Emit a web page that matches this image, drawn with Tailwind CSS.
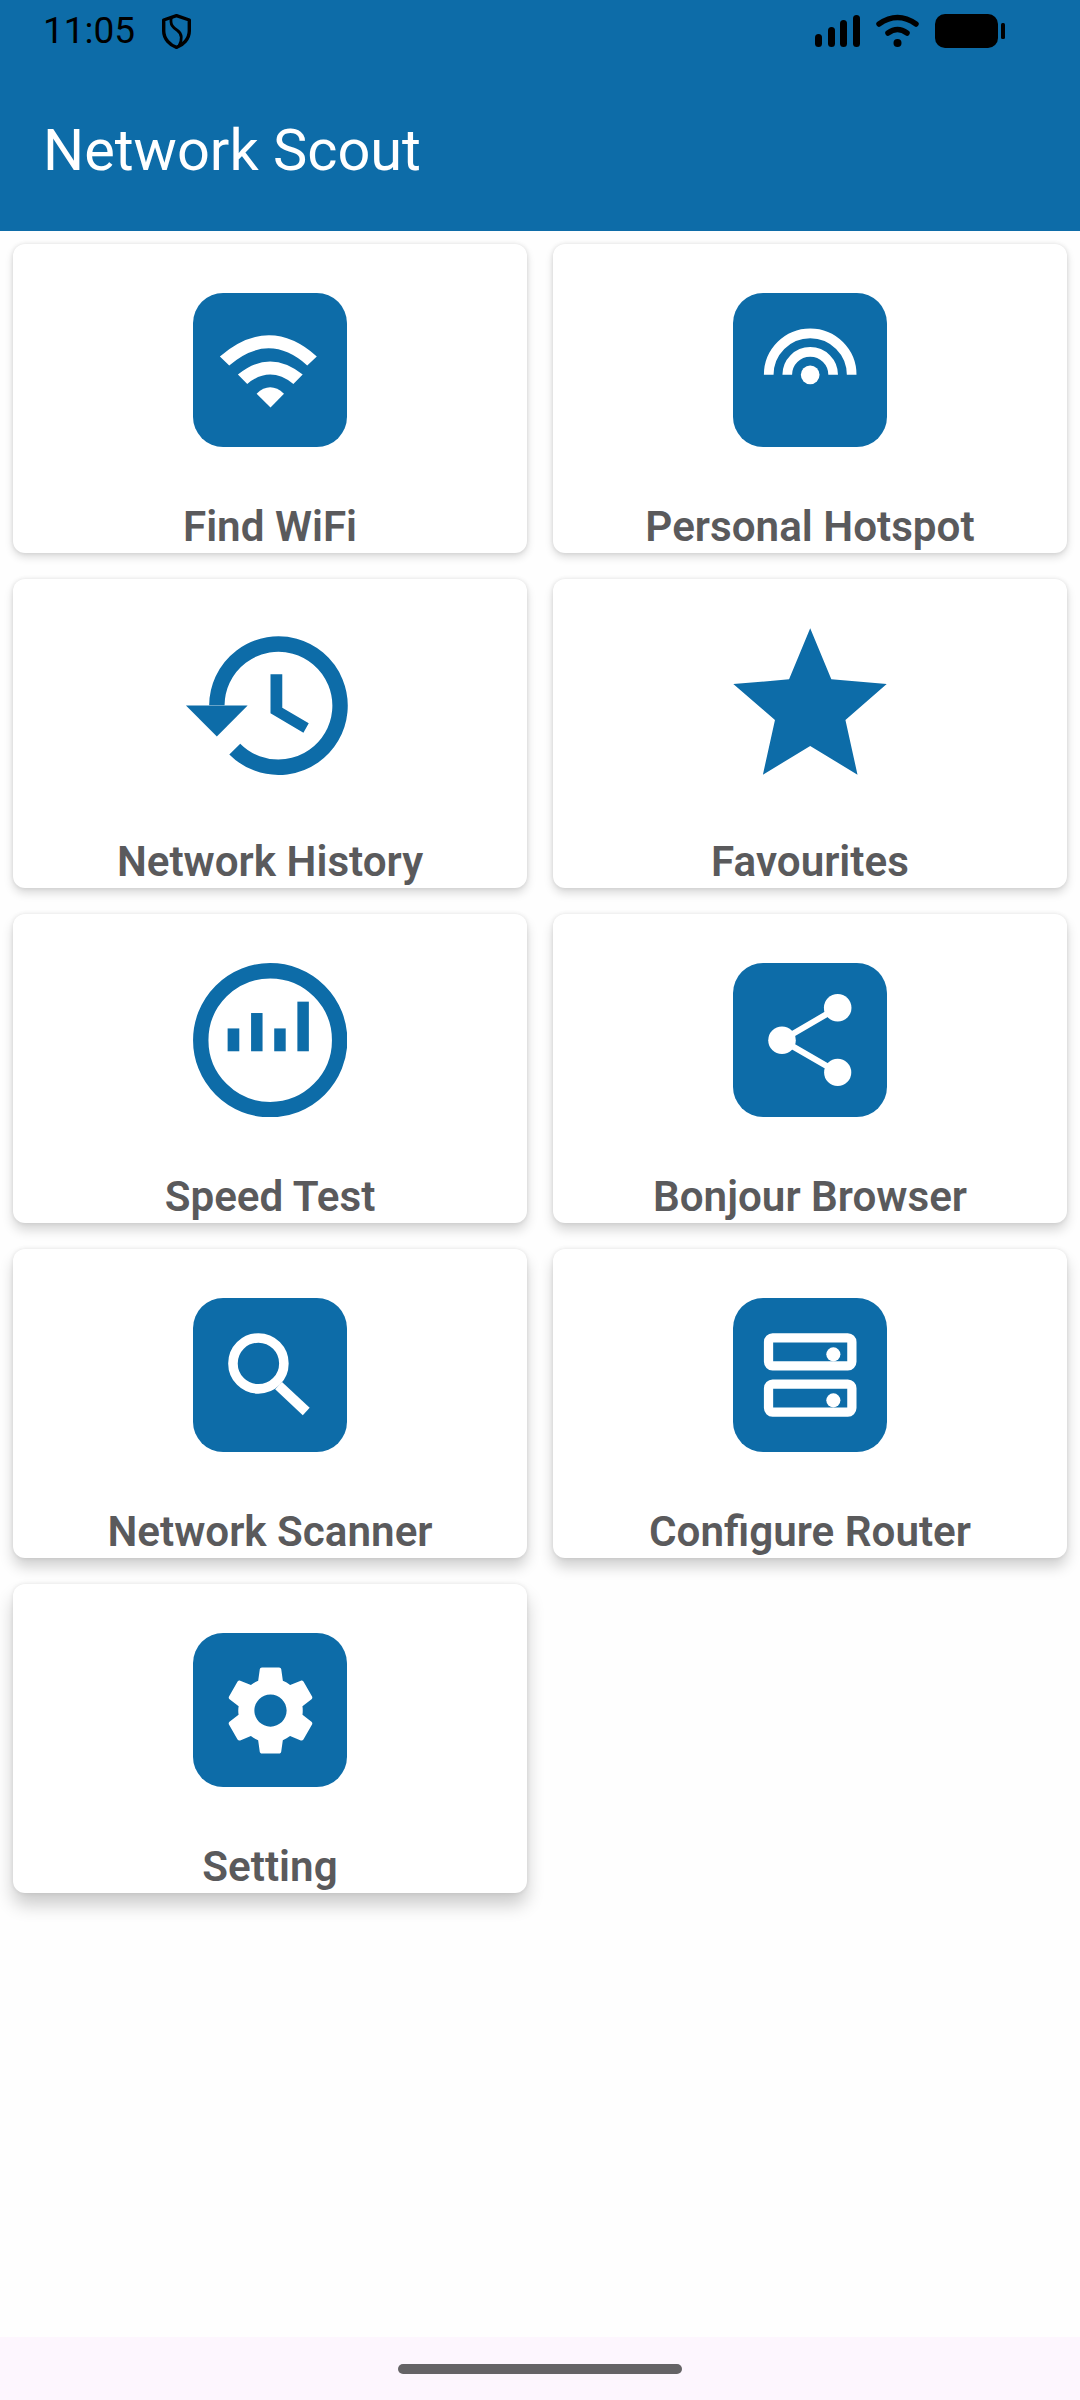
<!DOCTYPE html>
<html lang="en">
<head>
  <meta charset="UTF-8">
  <meta name="viewport" content="width=device-width, initial-scale=1.0">
  <title>Network Scout</title>
  <script src="https://cdn.jsdelivr.net/npm/@tailwindcss/browser@4"></script>
</head>
<body class="bg-[#fefefe] font-['Roboto',sans-serif]">
  <div class="w-[1080px] h-[2400px] flex flex-col overflow-hidden">

    <!-- app bar with status row -->
    <header class="h-[231px] bg-[#0d6ca8] shrink-0">
      <div class="h-[116px] flex items-start pl-[43px] pr-[75px]">
        <span class="mt-[9px] text-[37px] leading-[43px] text-black">11:05</span>
        <svg class="ml-[27px] mt-[14px]" width="29" height="35" viewBox="0 0 29 35" fill="none" stroke="#000">
          <path d="M14.5 1.7L27.3 6V17C27.3 25 21 31 14.5 33.4C8 31 1.700 25 1.700 17V6Z" stroke-width="3.400" stroke-linejoin="round"/>
          <path d="M9.500 3C7.500 11 11.500 14 15.500 16.500C20 19.500 20.500 26 17 32" stroke-width="2.800"/>
        </svg>
        <div class="ml-auto mt-[14px] flex items-start gap-[16px]">
          <svg width="45" height="34" viewBox="0 0 45 34" fill="#000">
            <rect x="0" y="20" width="7" height="13" rx="3.500"/>
            <rect x="13" y="13" width="7" height="20" rx="3.500"/>
            <rect x="25" y="6" width="7" height="27" rx="3.500"/>
            <rect x="38" y="1" width="7" height="32" rx="3.500"/>
          </svg>
          <svg width="43" height="34" viewBox="0 0 43 34" fill="none" stroke="#000" stroke-width="5.500" stroke-linecap="round">
            <path d="M3 10Q21.500 -3 40 10"/>
            <path d="M12 19Q21.500 12 31 19"/>
            <circle cx="21.500" cy="29" r="4" fill="#000" stroke="none"/>
          </svg>
          <svg width="70" height="34" viewBox="0 0 70 34" fill="#000">
            <rect x="0" y="0" width="63" height="34" rx="10"/>
            <rect x="66" y="9" width="4" height="16" rx="1.500"/>
          </svg>
        </div>
      </div>
      <h1 class="pl-[43px] text-[57.7px] leading-[68px] font-normal text-white">Network Scout</h1>
    </header>

    <!-- tools grid -->
    <main class="grid grid-cols-2 gap-[26px] px-[13px] pt-[13px]">

      <div class="h-[309px] bg-white rounded-[12px] flex flex-col items-center pt-[49px] overflow-hidden shadow-[0_4px_8px_rgba(0,0,0,0.14),0_0_4px_rgba(0,0,0,0.1)]">
        <svg class="shrink-0" width="154" height="154" viewBox="0 0 153 153">
          <rect width="153" height="153" rx="30" fill="#0d6ca8"/>
          <path fill="#fff" d="M26.700 63Q76 21 123 63L113.500 72Q75.500 38 36 72Z"/>
          <path fill="#fff" d="M44.600 81Q76.500 55 109 81L99.700 90.300Q76.500 71.700 53.900 90.300Z"/>
          <path fill="#fff" d="M63.200 100Q76.600 87.400 90.400 100L77 113.700Z"/>
        </svg>
        <span class="mt-[55px] text-[42.2px] leading-[50px] font-semibold text-[#5a5a5c]">Find WiFi</span>
      </div>

      <div class="h-[309px] bg-white rounded-[12px] flex flex-col items-center pt-[49px] overflow-hidden shadow-[0_4px_8px_rgba(0,0,0,0.14),0_0_4px_rgba(0,0,0,0.1)]">
        <svg class="shrink-0" width="154" height="154" viewBox="0 0 153 153">
          <rect width="153" height="153" rx="30" fill="#0d6ca8"/>
          <g fill="none" stroke="#fff" stroke-width="9.600">
            <path d="M35.500 81.300A41.200 41.200 0 0 1 117.900 81.300"/>
            <path d="M53.900 81.300A22.800 22.800 0 0 1 99.500 81.300"/>
          </g>
          <circle cx="76.700" cy="81.300" r="9.300" fill="#fff"/>
        </svg>
        <span class="mt-[55px] text-[42.2px] leading-[50px] font-semibold text-[#5a5a5c]">Personal Hotspot</span>
      </div>

      <div class="h-[309px] bg-white rounded-[12px] flex flex-col items-center pt-[49px] overflow-hidden shadow-[0_5px_10px_rgba(0,0,0,0.15),0_0_4px_rgba(0,0,0,0.1)]">
        <svg class="shrink-0 overflow-visible" width="154" height="154" viewBox="0 0 153 153">
          <path fill="none" stroke="#0d6ca8" stroke-width="15.300" d="M23.700 76.800A61.200 61.200 0 1 1 41.500 120.300"/>
          <path fill="#0d6ca8" d="M-7 77H54.300L23.700 107.700Z"/>
          <path fill="#0d6ca8" d="M77 46H88.700V79.300L115 94.700L109.700 104L77 84.700Z"/>
        </svg>
        <span class="mt-[55px] text-[42.2px] leading-[50px] font-semibold text-[#5a5a5c]">Network History</span>
      </div>

      <div class="h-[309px] bg-white rounded-[12px] flex flex-col items-center pt-[49px] overflow-hidden shadow-[0_5px_10px_rgba(0,0,0,0.15),0_0_4px_rgba(0,0,0,0.1)]">
        <svg class="shrink-0" width="154" height="154" viewBox="0 0 153 153">
          <path fill="#0d6ca8" d="M76.700 .3L97.700 51L152.700 55.700L111.700 91.300L123.700 145.700L76.700 117.300L29.700 145.700L41.700 91.300L.3 55.700L55.700 51Z"/>
        </svg>
        <span class="mt-[55px] text-[42.2px] leading-[50px] font-semibold text-[#5a5a5c]">Favourites</span>
      </div>

      <div class="h-[309px] bg-white rounded-[12px] flex flex-col items-center pt-[49px] overflow-hidden shadow-[0_7px_12px_rgba(0,0,0,0.16),0_0_4px_rgba(0,0,0,0.1)]">
        <svg class="shrink-0" width="154" height="154" viewBox="0 0 153 153">
          <circle cx="76.700" cy="76.700" r="69" fill="none" stroke="#0d6ca8" stroke-width="15.300"/>
          <g fill="#0d6ca8">
            <rect x="34.400" y="65" width="11.600" height="22.700"/>
            <rect x="57.700" y="49.700" width="11.400" height="38"/>
            <rect x="80.700" y="65" width="11.400" height="22.700"/>
            <rect x="103.700" y="38.400" width="11.400" height="49.300"/>
          </g>
        </svg>
        <span class="mt-[55px] text-[42.2px] leading-[50px] font-semibold text-[#5a5a5c]">Speed Test</span>
      </div>

      <div class="h-[309px] bg-white rounded-[12px] flex flex-col items-center pt-[49px] overflow-hidden shadow-[0_7px_12px_rgba(0,0,0,0.16),0_0_4px_rgba(0,0,0,0.1)]">
        <svg class="shrink-0" width="154" height="154" viewBox="0 0 153 153">
          <rect width="153" height="153" rx="30" fill="#0d6ca8"/>
          <path fill="none" stroke="#fff" stroke-width="6" d="M104 44.400L48.700 76.700L104 108.700"/>
          <g fill="#fff">
            <circle cx="104" cy="44.400" r="13.700"/>
            <circle cx="48.700" cy="76.700" r="13.700"/>
            <circle cx="104" cy="108.700" r="13.500"/>
          </g>
        </svg>
        <span class="mt-[55px] text-[42.2px] leading-[50px] font-semibold text-[#5a5a5c]">Bonjour Browser</span>
      </div>

      <div class="h-[309px] bg-white rounded-[12px] flex flex-col items-center pt-[49px] overflow-hidden shadow-[0_9px_14px_rgba(0,0,0,0.18),0_0_4px_rgba(0,0,0,0.1)]">
        <svg class="shrink-0" width="154" height="154" viewBox="0 0 153 153">
          <rect width="153" height="153" rx="30" fill="#0d6ca8"/>
          <circle cx="65" cy="65" r="25.300" fill="none" stroke="#fff" stroke-width="9.500"/>
          <path fill="none" stroke="#fff" stroke-width="10" d="M85 87L112.500 112.800"/>
        </svg>
        <span class="mt-[55px] text-[42.2px] leading-[50px] font-semibold text-[#5a5a5c]">Network Scanner</span>
      </div>

      <div class="h-[309px] bg-white rounded-[12px] flex flex-col items-center pt-[49px] overflow-hidden shadow-[0_9px_14px_rgba(0,0,0,0.18),0_0_4px_rgba(0,0,0,0.1)]">
        <svg class="shrink-0" width="154" height="154" viewBox="0 0 153 153">
          <rect width="153" height="153" rx="30" fill="#0d6ca8"/>
          <g fill="none" stroke="#fff" stroke-width="9.200">
            <rect x="35.300" y="39.600" width="82.800" height="27.800" rx="4"/>
            <rect x="35.300" y="85.600" width="82.800" height="27.800" rx="4"/>
          </g>
          <circle cx="99.700" cy="56" r="7" fill="#fff"/>
          <circle cx="99.700" cy="101.700" r="7" fill="#fff"/>
        </svg>
        <span class="mt-[55px] text-[42.2px] leading-[50px] font-semibold text-[#5a5a5c]">Configure Router</span>
      </div>

      <div class="h-[309px] bg-white rounded-[12px] flex flex-col items-center pt-[49px] overflow-hidden shadow-[0_12px_18px_rgba(0,0,0,0.2),0_0_4px_rgba(0,0,0,0.1)]">
        <svg class="shrink-0" width="154" height="154" viewBox="0 0 153 153">
          <rect width="153" height="153" rx="30" fill="#0d6ca8"/>
          <path transform="translate(23.600 23.600) scale(4.450)" fill="#fff" d="M19.140 12.940c.04-.3.06-.61.06-.94 0-.32-.02-.64-.07-.94l2.030-1.580c.18-.14.23-.41.12-.61l-1.920-3.320c-.12-.22-.37-.29-.59-.22l-2.390.96c-.5-.38-1.030-.7-1.620-.94l-.36-2.540c-.04-.24-.24-.41-.48-.41h-3.840c-.24 0-.43.17-.47.41l-.36 2.540c-.59.24-1.130.57-1.620.94l-2.390-.96c-.22-.08-.47 0-.59.22L2.740 8.870c-.12.21-.08.47.12.61l2.030 1.580c-.05.3-.09.63-.09.94s.02.64.07.94l-2.030 1.580c-.18.14-.23.41-.12.61l1.920 3.320c.12.22.37.29.59.22l2.390-.96c.5.38 1.030.7 1.620.94l.36 2.540c.05.24.24.41.48.41h3.840c.24 0 .44-.17.47-.41l.36-2.540c.59-.24 1.130-.56 1.620-.94l2.390.96c.22.08.47 0 .59-.22l1.920-3.320c.12-.22.07-.47-.12-.61l-2.010-1.580zM12 15.600c-1.980 0-3.600-1.620-3.600-3.600s1.620-3.600 3.600-3.600 3.600 1.620 3.600 3.600-1.620 3.600-3.600 3.600z"/>
        </svg>
        <span class="mt-[55px] text-[42.2px] leading-[50px] font-semibold text-[#5a5a5c]">Setting</span>
      </div>
    </main>

    <!-- gesture nav -->
    <footer class="mt-auto h-[63px] bg-[#fdf6fe] flex justify-center pt-[27px] shrink-0">
      <div class="w-[284px] h-[10px] rounded-full bg-[#656366]"></div>
    </footer>
  </div>
</body>
</html>
